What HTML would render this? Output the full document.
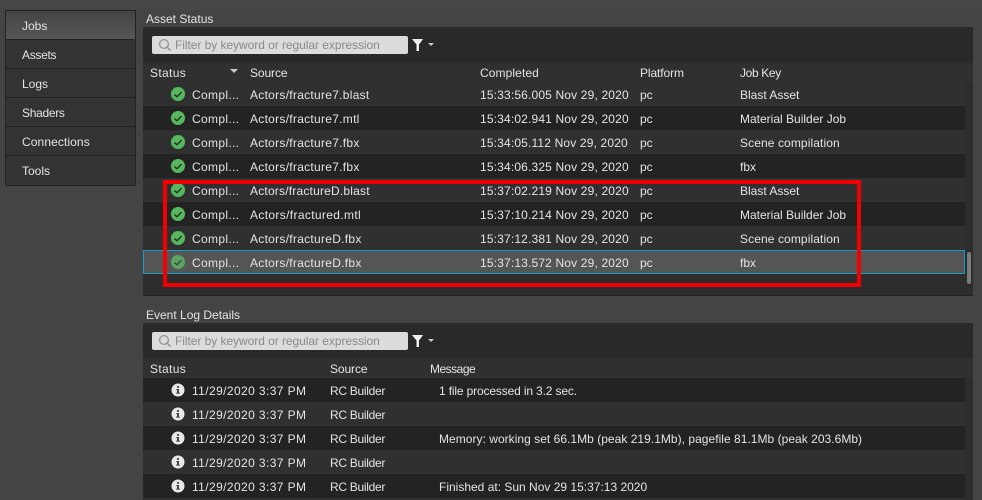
<!DOCTYPE html>
<html><head><meta charset="utf-8">
<style>
html,body{margin:0;padding:0;width:982px;height:500px;overflow:hidden;background:#444;}
body{position:relative;font-family:"Liberation Sans",sans-serif;font-size:12px;color:#e4e4e4;letter-spacing:0;}
.a{position:absolute;}
.t{position:absolute;white-space:nowrap;line-height:16px;}
.nav{position:absolute;left:5px;width:129px;height:28px;background:#333;border:1px solid #222;}
.nav span{position:absolute;left:16px;top:7px;line-height:16px;}
.row{position:absolute;left:143px;width:822px;height:24px;}
.d{background:#232323;}
.l{background:#303030;}
.c{letter-spacing:.35px;}
.s{letter-spacing:.28px;}
.m{letter-spacing:.16px;}
.dt{letter-spacing:.4px;}
.rc{letter-spacing:-.3px;}
svg{position:absolute;overflow:visible;}
</style></head><body>
<div class="a" style="left:0;top:0;width:982px;height:10px;background:#464646"></div>

<div class="a" style="left:5px;top:10px;width:130px;height:175px;background:#222"></div>
<div class="nav" style="top:10px;height:28px;background:linear-gradient(#444,#565656)"><span>Jobs</span></div>
<div class="nav" style="top:39px"><span style="letter-spacing:-.3px">Assets</span></div>
<div class="nav" style="top:68px"><span>Logs</span></div>
<div class="nav" style="top:97px"><span style="letter-spacing:-.3px">Shaders</span></div>
<div class="nav" style="top:126px"><span style="letter-spacing:.1px">Connections</span></div>
<div class="nav" style="top:155px;height:29px"><span>Tools</span></div>

<div class="t" style="left:146px;top:11px">Asset Status</div>
<div class="a" style="left:143px;top:27px;width:830px;height:268px;background:#2d2d2d;border-bottom:1px solid #222"></div>
<div class="a" style="left:143px;top:27px;width:830px;height:36px;background:#292929"></div>
<div class="a" style="left:143px;top:63px;width:830px;height:19px;background:#303030"></div>
<div class="a" style="left:152px;top:36px;width:256px;height:18px;background:#dcdcdc;border-radius:2px"></div>
<svg style="left:158px;top:38px" width="14" height="14" viewBox="0 0 14 14"><circle cx="6" cy="6" r="4.4" fill="none" stroke="#8f8f8f" stroke-width="1.2"/><path d="M9.2 9.2L12.6 12.6" stroke="#8f8f8f" stroke-width="1.4"/></svg>
<div class="t" style="left:175px;top:37px;color:#8a8a8a;letter-spacing:-.05px">Filter by keyword or regular expression</div>
<svg style="left:412px;top:39px" width="24" height="12" viewBox="0 0 24 12"><path d="M0 0H11L7 5.5V12H4.5V5.5Z" fill="#eee"/><path d="M16 4H22L19 7Z" fill="#ccc"/></svg>

<div class="t c" style="left:150px;top:65px">Status</div>
<svg style="left:230px;top:69px" width="9" height="5"><path d="M0 0H8L4 4Z" fill="#ccc"/></svg>
<div class="t" style="left:250px;top:65px;letter-spacing:-.1px">Source</div>
<div class="t" style="left:480px;top:65px;letter-spacing:.1px">Completed</div>
<div class="t" style="left:640px;top:65px;letter-spacing:-.1px">Platform</div>
<div class="t" style="left:740px;top:65px;letter-spacing:-.35px">Job Key</div>

<div class="row l" style="top:82px"></div>
<div class="row d" style="top:106px"></div>
<div class="row l" style="top:130px"></div>
<div class="row d" style="top:154px"></div>
<div class="row l" style="top:178px"></div>
<div class="row d" style="top:202px"></div>
<div class="row l" style="top:226px"></div>
<div class="row" style="top:250px;height:22px;width:820px;background:#555;border:1px solid #0d9fc4"></div>
<div class="a" style="left:967px;top:252px;width:4px;height:32px;background:#7a7a7a;border-radius:2px"></div>

<svg style="left:0;top:0;width:982px;height:500px" width="982" height="500">
<circle cx="178" cy="94" r="7" fill="#55b85c"/><path d="M174.5 94.5l2.5 2.3 4.5-4.8" fill="none" stroke="#2a2a2a" stroke-width="1.4"/>
<circle cx="178" cy="118" r="7" fill="#55b85c"/><path d="M174.5 118.5l2.5 2.3 4.5-4.8" fill="none" stroke="#2a2a2a" stroke-width="1.4"/>
<circle cx="178" cy="142" r="7" fill="#55b85c"/><path d="M174.5 142.5l2.5 2.3 4.5-4.8" fill="none" stroke="#2a2a2a" stroke-width="1.4"/>
<circle cx="178" cy="166" r="7" fill="#55b85c"/><path d="M174.5 166.5l2.5 2.3 4.5-4.8" fill="none" stroke="#2a2a2a" stroke-width="1.4"/>
<circle cx="178" cy="190" r="7" fill="#55b85c"/><path d="M174.5 190.5l2.5 2.3 4.5-4.8" fill="none" stroke="#2a2a2a" stroke-width="1.4"/>
<circle cx="178" cy="214" r="7" fill="#55b85c"/><path d="M174.5 214.5l2.5 2.3 4.5-4.8" fill="none" stroke="#2a2a2a" stroke-width="1.4"/>
<circle cx="178" cy="238" r="7" fill="#55b85c"/><path d="M174.5 238.5l2.5 2.3 4.5-4.8" fill="none" stroke="#2a2a2a" stroke-width="1.4"/>
<circle cx="178" cy="262" r="7" fill="#5aa45f"/><path d="M174.5 262.5l2.5 2.3 4.5-4.8" fill="none" stroke="#444" stroke-width="1.4"/>
</svg>

<div class="t c" style="left:192px;top:87px">Compl...</div><div class="t s" style="left:250px;top:87px">Actors/fracture7.blast</div><div class="t m" style="left:480px;top:87px">15:33:56.005 Nov 29, 2020</div><div class="t" style="left:640px;top:87px">pc</div><div class="t" style="left:740px;top:87px">Blast Asset</div>
<div class="t c" style="left:192px;top:111px">Compl...</div><div class="t s" style="left:250px;top:111px">Actors/fracture7.mtl</div><div class="t m" style="left:480px;top:111px">15:34:02.941 Nov 29, 2020</div><div class="t" style="left:640px;top:111px">pc</div><div class="t" style="left:740px;top:111px">Material Builder Job</div>
<div class="t c" style="left:192px;top:135px">Compl...</div><div class="t s" style="left:250px;top:135px">Actors/fracture7.fbx</div><div class="t m" style="left:480px;top:135px">15:34:05.112 Nov 29, 2020</div><div class="t" style="left:640px;top:135px">pc</div><div class="t" style="left:740px;top:135px;letter-spacing:.1px">Scene compilation</div>
<div class="t c" style="left:192px;top:159px">Compl...</div><div class="t s" style="left:250px;top:159px">Actors/fracture7.fbx</div><div class="t m" style="left:480px;top:159px">15:34:06.325 Nov 29, 2020</div><div class="t" style="left:640px;top:159px">pc</div><div class="t" style="left:740px;top:159px">fbx</div>
<div class="t c" style="left:192px;top:183px">Compl...</div><div class="t" style="left:250px;top:183px;letter-spacing:.2px">Actors/fractureD.blast</div><div class="t m" style="left:480px;top:183px">15:37:02.219 Nov 29, 2020</div><div class="t" style="left:640px;top:183px">pc</div><div class="t" style="left:740px;top:183px">Blast Asset</div>
<div class="t c" style="left:192px;top:207px">Compl...</div><div class="t c" style="left:250px;top:207px">Actors/fractured.mtl</div><div class="t m" style="left:480px;top:207px">15:37:10.214 Nov 29, 2020</div><div class="t" style="left:640px;top:207px">pc</div><div class="t" style="left:740px;top:207px">Material Builder Job</div>
<div class="t c" style="left:192px;top:231px">Compl...</div><div class="t s" style="left:250px;top:231px">Actors/fractureD.fbx</div><div class="t m" style="left:480px;top:231px">15:37:12.381 Nov 29, 2020</div><div class="t" style="left:640px;top:231px">pc</div><div class="t" style="left:740px;top:231px;letter-spacing:.1px">Scene compilation</div>
<div class="t c" style="left:192px;top:255px">Compl...</div><div class="t s" style="left:250px;top:255px">Actors/fractureD.fbx</div><div class="t m" style="left:480px;top:255px">15:37:13.572 Nov 29, 2020</div><div class="t" style="left:640px;top:255px">pc</div><div class="t" style="left:740px;top:255px">fbx</div>

<div class="a" style="left:163px;top:180px;width:690px;height:99px;border:4px solid #f00000"></div>

<div class="t" style="left:146px;top:307px">Event Log Details</div>
<div class="a" style="left:143px;top:323px;width:830px;height:177px;background:#2d2d2d"></div>
<div class="a" style="left:143px;top:323px;width:830px;height:35px;background:#292929"></div>
<div class="a" style="left:143px;top:358px;width:830px;height:20px;background:#303030"></div>
<div class="a" style="left:152px;top:332px;width:256px;height:18px;background:#dcdcdc;border-radius:2px"></div>
<svg style="left:158px;top:334px" width="14" height="14" viewBox="0 0 14 14"><circle cx="6" cy="6" r="4.4" fill="none" stroke="#8f8f8f" stroke-width="1.2"/><path d="M9.2 9.2L12.6 12.6" stroke="#8f8f8f" stroke-width="1.4"/></svg>
<div class="t" style="left:175px;top:333px;color:#8a8a8a;letter-spacing:-.05px">Filter by keyword or regular expression</div>
<svg style="left:412px;top:335px" width="24" height="12" viewBox="0 0 24 12"><path d="M0 0H11L7 5.5V12H4.5V5.5Z" fill="#eee"/><path d="M16 4H22L19 7Z" fill="#ccc"/></svg>

<div class="t c" style="left:150px;top:361px">Status</div>
<div class="t" style="left:330px;top:361px;letter-spacing:-.1px">Source</div>
<div class="t" style="left:430px;top:361px;letter-spacing:-.5px">Message</div>

<div class="row d" style="top:378px"></div>
<div class="row l" style="top:402px"></div>
<div class="row d" style="top:426px"></div>
<div class="row l" style="top:450px"></div>
<div class="row d" style="top:474px"></div>
<div class="row l" style="top:498px"></div>

<svg style="left:0;top:0" width="982" height="500">
<circle cx="178" cy="390" r="6.5" fill="#e8e8e8"/><path d="M177 386h2v1.8h-2zM176.3 389h2.7v3.6h.9v1h-3.8v-1h.9v-2.6h-.7z" fill="#444"/>
<circle cx="178" cy="414" r="6.5" fill="#e8e8e8"/><path d="M177 410h2v1.8h-2zM176.3 413h2.7v3.6h.9v1h-3.8v-1h.9v-2.6h-.7z" fill="#444"/>
<circle cx="178" cy="438" r="6.5" fill="#e8e8e8"/><path d="M177 434h2v1.8h-2zM176.3 437h2.7v3.6h.9v1h-3.8v-1h.9v-2.6h-.7z" fill="#444"/>
<circle cx="178" cy="462" r="6.5" fill="#e8e8e8"/><path d="M177 458h2v1.8h-2zM176.3 461h2.7v3.6h.9v1h-3.8v-1h.9v-2.6h-.7z" fill="#444"/>
<circle cx="178" cy="486" r="6.5" fill="#e8e8e8"/><path d="M177 482h2v1.8h-2zM176.3 485h2.7v3.6h.9v1h-3.8v-1h.9v-2.6h-.7z" fill="#444"/>
</svg>

<div class="t dt" style="left:192px;top:383px">11/29/2020 3:37 PM</div><div class="t rc" style="left:330px;top:383px">RC Builder</div><div class="t" style="left:439px;top:383px;letter-spacing:-.15px">1 file processed in 3.2 sec.</div>
<div class="t dt" style="left:192px;top:407px">11/29/2020 3:37 PM</div><div class="t rc" style="left:330px;top:407px">RC Builder</div>
<div class="t dt" style="left:192px;top:431px">11/29/2020 3:37 PM</div><div class="t rc" style="left:330px;top:431px">RC Builder</div><div class="t" style="left:439px;top:431px;letter-spacing:.03px">Memory: working set 66.1Mb (peak 219.1Mb), pagefile 81.1Mb (peak 203.6Mb)</div>
<div class="t dt" style="left:192px;top:455px">11/29/2020 3:37 PM</div><div class="t rc" style="left:330px;top:455px">RC Builder</div>
<div class="t dt" style="left:192px;top:479px">11/29/2020 3:37 PM</div><div class="t rc" style="left:330px;top:479px">RC Builder</div><div class="t" style="left:439px;top:479px">Finished at: Sun Nov 29 15:37:13 2020</div>
</body></html>
